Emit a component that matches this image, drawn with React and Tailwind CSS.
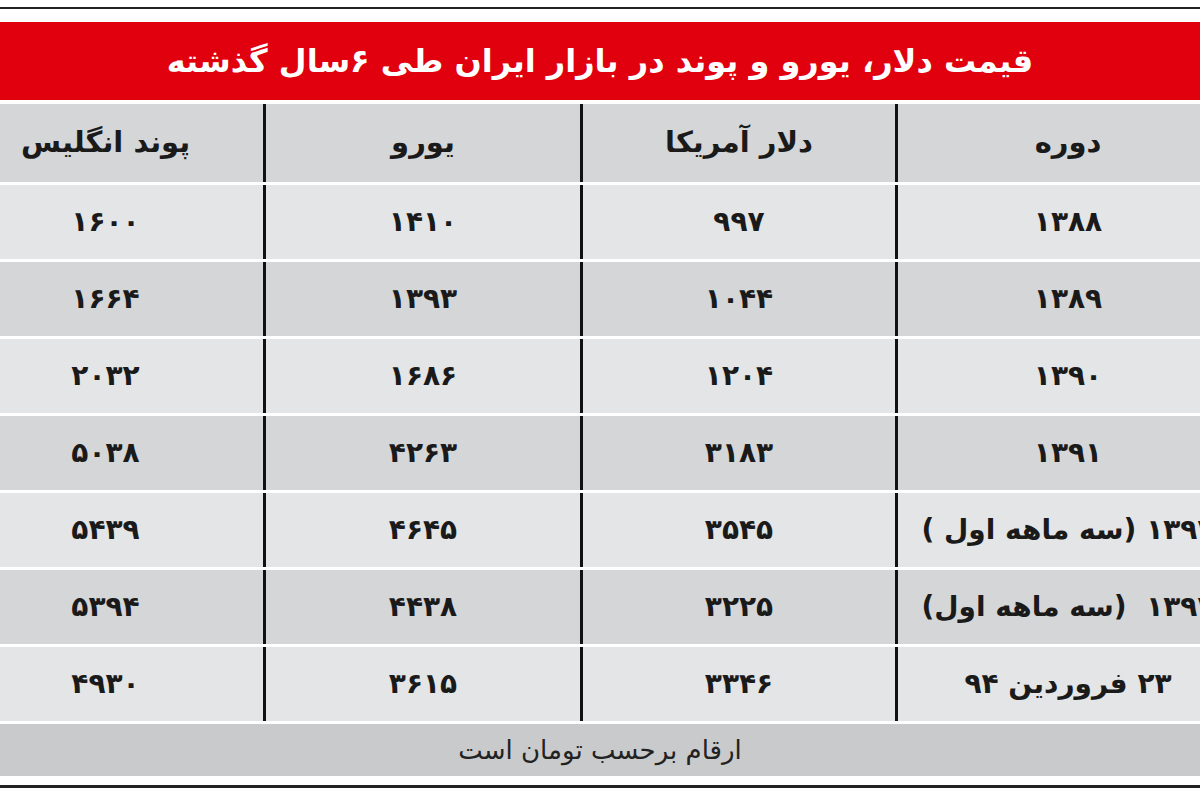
import React from "react"

const rows = [
  ["۱۳۸۸", "۹۹۷", "۱۴۱۰", "۱۶۰۰"],
  ["۱۳۸۹", "۱۰۴۴", "۱۳۹۳", "۱۶۶۴"],
  ["۱۳۹۰", "۱۲۰۴", "۱۶۸۶", "۲۰۳۲"],
  ["۱۳۹۱", "۳۱۸۳", "۴۲۶۳", "۵۰۳۸"],
  ["۱۳۹۲ (سه ماهه اول )", "۳۵۴۵", "۴۶۴۵", "۵۴۳۹"],
  ["۱۳۹۳  (سه ماهه اول)", "۳۲۲۵", "۴۴۳۸", "۵۳۹۴"],
  ["۲۳ فروردین ۹۴", "۳۳۴۶", "۳۶۱۵", "۴۹۳۰"],
]

const head = ["دوره", "دلار آمریکا", "یورو", "پوند انگلیس"]

function Row({cells, bg}) {
  return (
    <div className={`grid grid-cols-[343px_315px_317px_315px] h-[74px] ${bg}`}>
      {cells.map((c, i) => (
        <div
          key={i}
          className={`flex items-center justify-center whitespace-pre text-[28px] font-bold ${i > 0 ? "tracking-[2px]" : ""} ${i < 3 ? "border-l-[3px] border-[#111]" : ""}`}
        >
          {c}
        </div>
      ))}
    </div>
  )
}

export default function App() {
  return (
    <div
      dir="rtl"
      className="w-[1200px] h-[800px] bg-white overflow-hidden text-[#1a1a1a]"
      style={{fontFamily: '"DejaVu Sans", sans-serif'}}
    >
      <div className="pt-[7px]">
        <div className="h-[2px] bg-[#222]"></div>
      </div>

      {/* title */}
      <div className="mt-[13px] h-[78px] bg-[#e0000e] flex items-center justify-center text-white text-[32px] font-bold">
        قیمت دلار، یورو و پوند در بازار ایران طی ۶سال گذشته
      </div>

      {/* table, wider than the page and cut on both sides */}
      <div className="mr-[-38px] ml-[-52px] w-[1290px] mt-[4px] flex flex-col gap-[3px]">
        <div className="grid grid-cols-[343px_315px_317px_315px] h-[78px] bg-[#d4d6d8]">
          {head.map((c, i) => (
            <div
              key={i}
              className={`flex items-center justify-center text-[29px] font-bold ${i < 3 ? "border-l-[3px] border-[#111]" : ""}`}
            >
              {c}
            </div>
          ))}
        </div>
        {rows.map((r, i) => (
          <Row key={i} cells={r} bg={i % 2 === 0 ? "bg-[#e4e5e6]" : "bg-[#d5d6d8]"} />
        ))}
      </div>

      <div className="mt-[3px] h-[52px] bg-[#c9cacc] flex items-center justify-center text-[26px] text-[#222]">
        ارقام برحسب تومان است
      </div>

      <div className="mt-[9px] h-[3px] bg-[#222]"></div>
    </div>
  )
}
